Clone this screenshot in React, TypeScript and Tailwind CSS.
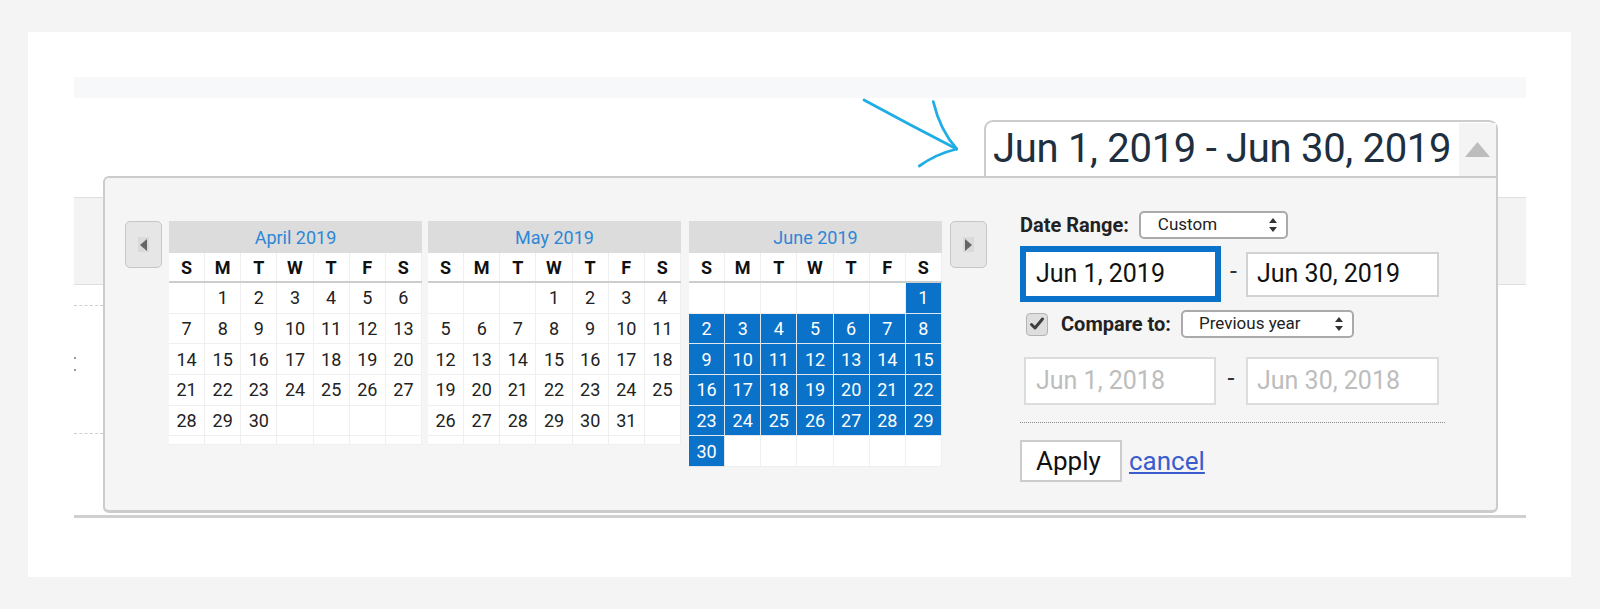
import React from "react";

type Month = { name: string; start: number; count: number; selected?: boolean };

const months: Month[] = [
  { name: "April 2019", start: 1, count: 30 },
  { name: "May 2019", start: 3, count: 31 },
  { name: "June 2019", start: 6, count: 30, selected: true },
];

const weekdays = ["S", "M", "T", "W", "T", "F", "S"];

const Calendar = ({ month, className }: { month: Month; className?: string }) => {
  const cells: (number | null)[] = [];
  for (let i = 0; i < month.start; i++) cells.push(null);
  for (let d = 1; d <= month.count; d++) cells.push(d);
  while (cells.length < 42) cells.push(null);
  const rows: (number | null)[][] = [];
  for (let r = 0; r < 6; r++) rows.push(cells.slice(r * 7, r * 7 + 7));

  return (
    <div className={`w-[253px] shrink-0 ${className ?? ""}`}>
      <div className="flex h-[32px] items-center justify-center bg-[#dcdcdc] text-[18px] text-[#2d86d6]">
        {month.name}
      </div>
      <div className="grid h-[30px] grid-cols-7 border-b-2 border-[#cdcdcd] bg-white">
        {weekdays.map((d, i) => (
          <div
            key={i}
            className="flex items-center justify-center border-r border-[#efefef] text-[18px] font-bold text-[#111]"
          >
            {d}
          </div>
        ))}
      </div>
      {rows.map((row, r) => {
        const empty = row.every((c) => c === null);
        return (
          <div key={r} className={`grid grid-cols-7 ${empty ? "h-[9px]" : "h-[30.7px]"}`}>
            {row.map((d, i) =>
              d !== null && month.selected ? (
                <div
                  key={i}
                  className="flex items-center justify-center border-r border-b border-[#dfe6ee] bg-[#0a72c8] text-[18px] text-white"
                >
                  {d}
                </div>
              ) : (
                <div
                  key={i}
                  className="flex items-center justify-center border-r border-b border-[#efefef] bg-white text-[18px] text-[#222]"
                >
                  {d}
                </div>
              )
            )}
          </div>
        );
      })}
    </div>
  );
};

const NavButton = ({ dir, className }: { dir: "prev" | "next"; className?: string }) => (
  <div
    className={`flex h-[47px] w-[37px] shrink-0 items-center justify-center rounded-[5px] border-[1.5px] border-[#c6c6c6] bg-[#e6e6e6] ${className ?? ""}`}
  >
    <div className="flex h-[15px] w-[11px] items-center justify-center bg-[#dadada]">
      <svg width="7" height="12" viewBox="0 0 7 12">
        {dir === "prev" ? (
          <polygon points="7,0 7,12 0,6" fill="#666" />
        ) : (
          <polygon points="0,0 0,12 7,6" fill="#666" />
        )}
      </svg>
    </div>
  </div>
);

const SelectArrows = () => (
  <svg width="8" height="14" viewBox="0 0 8 14" className="ml-auto mr-[9px]">
    <polygon points="4,0 8,5 0,5" fill="#333" />
    <polygon points="0,9 8,9 4,14" fill="#333" />
  </svg>
);

export default function App() {
  return (
    <div className="min-h-screen bg-[#f4f4f4] pl-[28px] pt-[32px] font-[Roboto,sans-serif]">
      <div className="relative h-[545px] w-[1543px] bg-white">
        {/* report page behind the picker */}
        <div className="ml-[46px] w-[1452px] pt-[45px]">
          <div className="h-[21px] bg-[#f7f8fa]" />
          <div className="mt-[99px] h-[88px] border-y border-[#dedede] bg-[#f3f3f3]" />
          <div className="mt-[20px] w-[40px] border-t border-dashed border-[#cfcfcf]" />
          <div className="mt-[51px] flex flex-col gap-[10px]">
            <div className="h-[2px] w-[2px] bg-[#999]" />
            <div className="h-[2px] w-[2px] bg-[#999]" />
          </div>
          <div className="mt-[62px] w-[40px] border-t border-dashed border-[#cfcfcf]" />
          <div className="mt-[81px] h-[3px] bg-[#d0d0d0]" />
        </div>

        {/* annotation arrow */}
        <svg
          className="absolute left-[830px] top-[60px]"
          width="110"
          height="85"
          viewBox="0 0 110 85"
          fill="none"
          stroke="#20ade6"
          strokeWidth="2.8"
          strokeLinecap="round"
        >
          <path d="M6 8 Q 52 33 98.7 57" />
          <path d="M75.3 9.7 Q 82 38 98.7 57" />
          <path d="M98.7 57 Q 78 62 61.3 74" />
        </svg>

        {/* date picker */}
        <div className="absolute left-[75px] top-[88px] flex w-[1395px] flex-col">
          <div className="flex h-[56px] w-[514px] self-end rounded-t-[9px] border-2 border-b-0 border-[#cccccc] bg-white">
            <div className="flex flex-1 items-center whitespace-nowrap pl-[7px] text-[40px] leading-none tracking-[-0.3px] text-[#1e2f40]">
              Jun 1, 2019 - Jun 30, 2019
            </div>
            <div className="mt-[1px] flex w-[37px] items-center justify-center bg-[#f4f4f4]">
              <svg width="25" height="15" viewBox="0 0 25 15">
                <polygon points="12.5,0 25,15 0,15" fill="#bdbdbd" />
              </svg>
            </div>
          </div>

          <div className="h-[337px] rounded-[6px] rounded-tr-none border-2 border-b-[3px] border-[#cccccc] bg-[#f5f5f5]">
            <div className="flex items-start pl-[20px] pt-[33px]">
              <div className="mt-[10px] flex items-start">
                <NavButton dir="prev" />
                <Calendar month={months[0]} className="ml-[7px]" />
                <Calendar month={months[1]} className="ml-[6px]" />
                <Calendar month={months[2]} className="ml-[8px]" />
                <NavButton dir="next" className="ml-[8px]" />
              </div>

              <div className="ml-[33px] flex flex-col">
                <div className="flex h-[28px] items-center">
                  <span className="text-[20px] font-bold leading-none text-[#222]">Date Range:</span>
                  <div className="ml-[10px] flex h-[28px] w-[149px] items-center rounded-[5px] border-2 border-[#aaaaaa] bg-white pl-[17px] text-[17px] text-[#222]">
                    Custom
                    <SelectArrows />
                  </div>
                </div>

                <div className="mt-[7px] flex items-center">
                  <div className="flex h-[56px] w-[201px] items-center border-[6px] border-[#0a72c8] bg-white pl-[10px] text-[25px] text-[#111]">
                    Jun 1, 2019
                  </div>
                  <div className="w-[25px] pb-[4px] text-center text-[25px] text-[#333]">-</div>
                  <div className="flex h-[45px] w-[193px] items-center border-2 border-[#d2d2d2] bg-white pl-[9px] text-[25px] text-[#111]">
                    Jun 30, 2019
                  </div>
                </div>

                <div className="mt-[8px] flex h-[28px] items-center">
                  <div className="ml-[6px] flex h-[23px] w-[22px] items-center justify-center rounded-[4px] border border-[#b4b4b4] bg-[#dedede]">
                    <svg width="16" height="16" viewBox="0 0 16 16" fill="none">
                      <path d="M2.5 8.5 L6 12 L13.5 3" stroke="#3f3f3f" strokeWidth="3" strokeLinecap="round" strokeLinejoin="round" />
                    </svg>
                  </div>
                  <span className="ml-[13px] text-[20px] font-bold leading-none text-[#222]">Compare to:</span>
                  <div className="ml-[10px] flex h-[28px] w-[173px] items-center rounded-[5px] border-2 border-[#aaaaaa] bg-white pl-[16px] text-[17px] text-[#222]">
                    Previous year
                    <SelectArrows />
                  </div>
                </div>

                <div className="mt-[19px] flex items-center">
                  <div className="ml-[4px] flex h-[48px] w-[192px] items-center border-2 border-[#dcdcdc] bg-white pl-[10px] text-[25px] text-[#bdbdbd]">
                    Jun 1, 2018
                  </div>
                  <div className="w-[30px] pb-[4px] text-center text-[25px] text-[#333]">-</div>
                  <div className="flex h-[48px] w-[193px] items-center border-2 border-[#dcdcdc] bg-white pl-[9px] text-[25px] text-[#bdbdbd]">
                    Jun 30, 2018
                  </div>
                </div>

                <div className="mt-[17px] w-[425px] border-t border-dotted border-[#8a8a8a]" />

                <div className="mt-[17px] flex items-center">
                  <div className="flex h-[42px] w-[102px] items-center border-2 border-[#cccccc] bg-white pl-[14px] text-[26px] text-[#111]">
                    Apply
                  </div>
                  <a href="#" className="ml-[7px] text-[26px] text-[#3a5ccc] underline">
                    cancel
                  </a>
                </div>
              </div>
            </div>
          </div>
        </div>
      </div>
    </div>
  );
}
